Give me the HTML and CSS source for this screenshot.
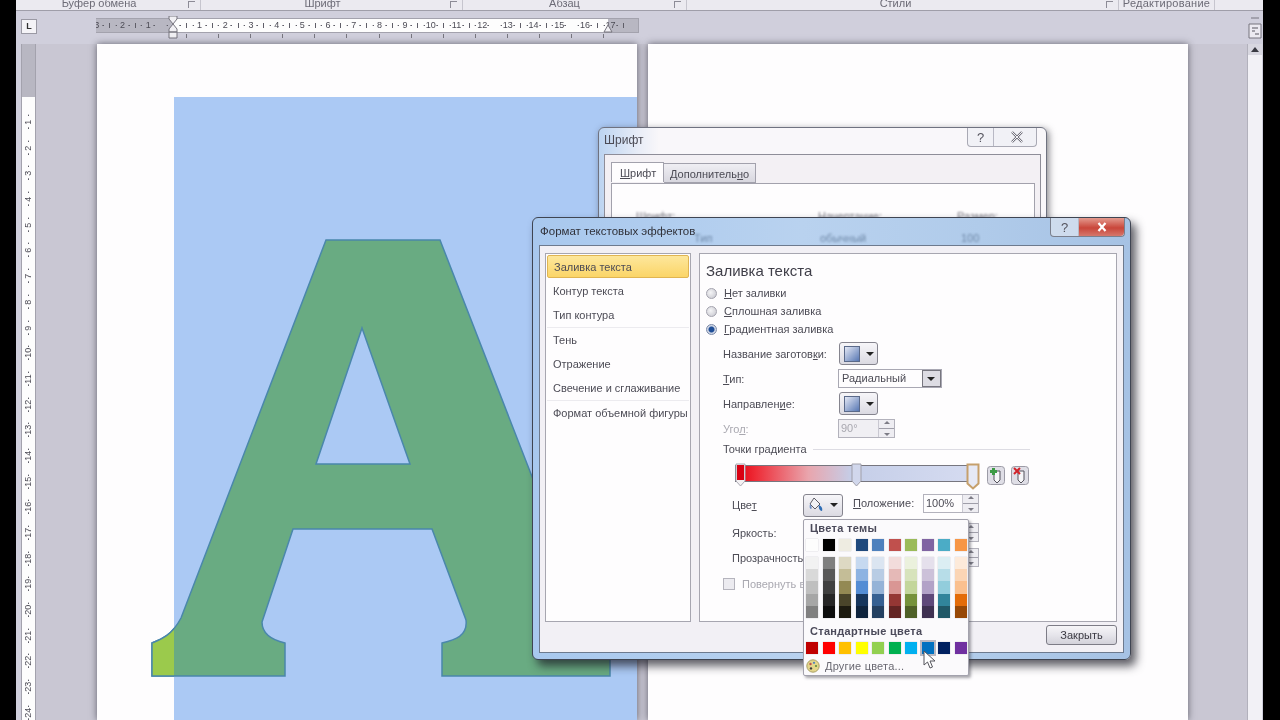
FILE: index.html
```html
<!DOCTYPE html>
<html lang="ru">
<head>
    <meta charset="UTF-8">
    <meta name="viewport" content="width=device-width, initial-scale=1.0">
    <title>Формат текстовых эффектов</title>
    <link rel="stylesheet" href="styles.css">
</head>
<body>
    <div class="app">
        <div class="ribbon">
            <div class="group group-clip"><span>Буфер обмена</span><i class="launcher"></i></div>
            <div class="group group-font"><span>Шрифт</span><i class="launcher"></i></div>
            <div class="group group-para"><span>Абзац</span><i class="launcher"></i></div>
            <div class="group group-styles"><span>Стили</span><i class="launcher"></i></div>
            <div class="group group-edit"><span>Редактирование</span></div>
        </div>

        <div class="ruler-row">
            <div class="tab-btn">L</div>
            <div class="h-ruler">
                <div class="h-numbers">
                    <span>3</span><span>2</span><span>1</span><span></span>
                    <span>1</span><span>2</span><span>3</span><span>4</span><span>5</span><span>6</span>
                    <span>7</span><span>8</span><span>9</span><span>10</span><span>11</span><span>12</span>
                    <span>13</span><span>14</span><span>15</span><span>16</span><span>17</span>
                </div>
                <svg class="indent indent-left" viewBox="0 0 10 23"><path d="M1 0h8v3L5 8 1 3zM5 8l4 5v3H1v-3zM1 16h8v6H1z" fill="#f1f0f4" stroke="#77757f"/></svg>
                <svg class="indent indent-right" viewBox="0 0 10 9"><path d="M5 1l4 7H1z" fill="#f1f0f4" stroke="#77757f"/></svg>
            </div>
            <svg class="split-btn" viewBox="0 0 14 26"><path d="M3 2h8M1 8h12v14H1z" fill="#eceaf1" stroke="#77757f"/><path d="M4 12h6M4 15h3M7 18h4" stroke="#56545e" fill="none"/></svg>
        </div>

        <div class="main">
            <div class="v-ruler">
                <div class="v-numbers">
                    <span>1</span><span>2</span><span>3</span><span>4</span><span>5</span><span>6</span>
                    <span>7</span><span>8</span><span>9</span><span>10</span><span>11</span><span>12</span>
                    <span>13</span><span>14</span><span>15</span><span>16</span><span>17</span><span>18</span>
                    <span>19</span><span>20</span><span>21</span><span>22</span><span>23</span><span>24</span>
                </div>
            </div>
            <div class="doc">
                <div class="page">
                    <div class="blue-box"></div>
                    <svg class="letter" viewBox="97 44 540 676">
                        <defs>
                            <path id="letterA" d="M152 676V643C162 639 172 635 181 618L326 240H440L587 618C594 634 600 640 610 643V676H442V643C455 640 468 636 466 620L432 529H293L262 622C262 634 272 640 285 643V676ZM362 328L316 464H410Z"/>
                            <clipPath id="onWhite"><rect x="97" y="44" width="77" height="676"/></clipPath>
                        </defs>
                        <use href="#letterA" fill="#69ab82" fill-rule="evenodd" stroke="#4a87ab" stroke-width="1.5"/>
                        <use href="#letterA" fill="#9bca4c" fill-rule="evenodd" stroke="#4a87ab" stroke-width="1.5" clip-path="url(#onWhite)"/>
                    </svg>
                </div>
                <div class="page"></div>
            </div>
            <div class="scrollbar"><div class="scroll-up"></div></div>
        </div>

        <!-- окно "Шрифт" -->
        <div class="font-dialog">
            <div class="font-title">
                <span>Шрифт</span>
                <div class="caption-btns plain">
                    <b class="cap-help">?</b>
                    <b class="cap-close"><svg viewBox="0 0 14 12"><path d="M2 1l10 10M12 1L2 11" stroke="#6f6e78" stroke-width="2.4" fill="none"/><path d="M2 1l10 10M12 1L2 11" stroke="#f3f2f6" stroke-width="1" fill="none"/></svg></b>
                </div>
            </div>
            <div class="font-body">
                <div class="font-tabs">
                    <div class="font-tab active"><u>Ш</u>рифт</div>
                    <div class="font-tab">Дополнитель<u>н</u>о</div>
                </div>
                <div class="font-sheet">
                    <div class="sheet-head"><span>Шрифт:</span><span>Начертание:</span><span>Размер:</span></div>
                </div>
            </div>
        </div>

        <!-- окно "Формат текстовых эффектов" -->
        <div class="fx-dialog">
            <div class="fx-title">
                <span class="fx-name">Формат текстовых эффектов</span>
                <div class="behind"><span>Тип</span><span>обычный</span><span>100</span></div>
                <div class="caption-btns">
                    <b class="cap-help">?</b>
                    <b class="cap-close red"><svg viewBox="0 0 14 12"><path d="M3.500 2l7 8M10.500 2l-7 8" stroke="#fff" stroke-width="2.200" fill="none"/></svg></b>
                </div>
            </div>
            <div class="fx-inner">
                <div class="fx-panels">
                    <ul class="fx-list">
                        <li class="selected">Заливка текста</li>
                        <li>Контур текста</li>
                        <li class="before-line">Тип контура</li>
                        <li>Тень</li>
                        <li>Отражение</li>
                        <li class="before-line">Свечение и сглаживание</li>
                        <li>Формат объемной фигуры</li>
                    </ul>
                    <div class="fx-pane">
                        <h3>Заливка текста</h3>
                        <div class="radio-row"><i class="radio"></i><span><u>Н</u>ет заливки</span></div>
                        <div class="radio-row"><i class="radio"></i><span><u>С</u>плошная заливка</span></div>
                        <div class="radio-row"><i class="radio on"></i><span><u>Г</u>радиентная заливка</span></div>

                        <div class="form-row row-preset">
                            <label>Название заготов<u>к</u>и:</label>
                            <div class="drop-btn"><i class="preset-swatch"></i><i class="arrow"></i></div>
                        </div>
                        <div class="form-row row-type">
                            <label><u>Т</u>ип:</label>
                            <div class="combo"><span>Радиальный</span><b><i class="arrow"></i></b></div>
                        </div>
                        <div class="form-row row-dir">
                            <label>Направлен<u>и</u>е:</label>
                            <div class="drop-btn"><i class="preset-swatch"></i><i class="arrow"></i></div>
                        </div>
                        <div class="form-row row-angle disabled">
                            <label>Уго<u>л</u>:</label>
                            <div class="spin spin-angle"><span>90°</span><b></b></div>
                        </div>

                        <div class="section-title"><span>Точки градиента</span><i></i></div>

                        <div class="stops-row">
                            <div class="grad-bar">
                                <svg class="stop stop-red" viewBox="0 0 11 25"><path d="M1 1h9v17l-4.500 5-4.500-5z" fill="#f4f1f3" stroke="#a9a8b2"/><rect x="2" y="2" width="7" height="15" fill="#d90012"/></svg>
                                <svg class="stop stop-mid" viewBox="0 0 11 25"><path d="M1 1h9v17l-4.500 5-4.500-5z" fill="#d1d7ec" stroke="#a09fa9"/></svg>
                                <svg class="stop stop-end" viewBox="0 0 14 27"><path d="M1.500 1.500h11v19l-5.500 5-5.500-5z" fill="#e6e9f6" stroke="#c6a06c" stroke-width="2"/></svg>
                            </div>
                            <svg class="stop-btn btn-add" viewBox="0 0 18 19"><rect x=".5" y=".5" width="17" height="18" rx="3" fill="#dfdee6" stroke="#9c9ba6"/><path d="M7 5h6v9l-3 3-3-3z" fill="#f6f6f8" stroke="#55535c"/><path d="M5 2h3v2h2v3H8v2H5V7H3V4h2z" fill="#3d9b45"/></svg>
                            <svg class="stop-btn btn-del" viewBox="0 0 18 19"><rect x=".5" y=".5" width="17" height="18" rx="3" fill="#dfdee6" stroke="#9c9ba6"/><path d="M7 5h6v9l-3 3-3-3z" fill="#f6f6f8" stroke="#55535c"/><path d="M3 2l6 6M9 2L3 8" stroke="#d2232a" stroke-width="2"/></svg>
                        </div>

                        <div class="form-row row-color">
                            <label class="indent-label">Цве<u>т</u></label>
                            <div class="drop-btn color-btn">
                                <svg class="bucket" viewBox="0 0 16 16"><path d="M6 1l6 6-5 5-5-5z" fill="#f2f2f5" stroke="#5d5c66"/><path d="M2 7c-1 3 0 5 1 5s1-3-1-5z" fill="#6e8fc4"/><path d="M11 8c2 1 4 3 3 6-2 0-4-3-3-6z" fill="#2f6db5"/></svg>
                                <i class="arrow"></i>
                            </div>
                            <label class="pos-label"><u>П</u>оложение:</label>
                            <div class="spin"><span>100%</span><b></b></div>
                        </div>
                        <div class="form-row row-bright">
                            <label class="indent-label wide">Яркость:</label>
                            <div class="spin"><b></b></div>
                        </div>
                        <div class="form-row row-transp">
                            <label class="indent-label wide">Прозрачность:</label>
                            <div class="spin"><b></b></div>
                        </div>
                        <div class="check-row"><i class="check"></i><span>Повернуть вместе с фигурой</span></div>
                    </div>
                </div>
                <div class="fx-footer"><button type="button">Закрыть</button></div>
            </div>
        </div>

        <!-- палитра -->
        <div class="palette">
            <div class="palette-title">Цвета темы</div>
            <div class="swatch-row theme-row"><i></i><i></i><i></i><i></i><i></i><i></i><i></i><i></i><i></i><i></i></div>
            <div class="swatch-row shade-row"><i></i><i></i><i></i><i></i><i></i><i></i><i></i><i></i><i></i><i></i></div>
            <div class="palette-title second">Стандартные цвета</div>
            <div class="swatch-row std-row"><i></i><i></i><i></i><i></i><i></i><i></i><i></i><i></i><i></i><i></i></div>
            <div class="more-row">
                <svg viewBox="0 0 14 14"><circle cx="7" cy="7" r="6.200" fill="#e4d68a" stroke="#a9a067"/><circle cx="4.500" cy="5" r="1.200" fill="#c0504d"/><circle cx="8" cy="3.800" r="1.100" fill="#4f81bd"/><circle cx="10" cy="7" r="1.100" fill="#5d8f3a"/><circle cx="5" cy="9.400" r="1.200" fill="#3a3a3a"/></svg>
                <span>Другие цвета...</span>
            </div>
        </div>

        <svg class="cursor" viewBox="0 0 13 19"><path d="M1 1v14l3.500-3 2.500 6 2.500-1-2.500-6H12z" fill="#fff" stroke="#55555c"/></svg>
    </div>
</body>
</html>
```

FILE: styles.css
```css
html, body {
    margin: 0;
    padding: 0;
    height: 720px;
    overflow: hidden;
    background: #000;
}

body {
    font-family: "Liberation Sans", Arial, sans-serif;
    font-size: 11px;
    color: #45444c;
}

.app {
    position: relative;
    width: 1247px;
    height: 720px;
    margin-left: 16px;
    background: #d0cfdc;
    overflow: hidden;
    filter: blur(0.45px);
}

/* лента, виден только низ */
.ribbon {
    display: flex;
    height: 10px;
    background: #ebeaf0;
    border-bottom: 1px solid #9f9ea9;
    overflow: hidden;
}

.group {
    position: relative;
    height: 10px;
    border-right: 1px solid #c6c5ce;
    text-align: center;
    line-height: 7px;
    font-size: 11px;
    color: #6c6b76;
}

.group-clip { width: 166px; padding-right: 18px; }
.group-font { width: 243px; padding-right: 18px; }
.group-para { width: 203px; padding-right: 20px; }
.group-styles { width: 417px; padding-right: 14px; }
.group-edit { width: 95px; letter-spacing: .25px; }

.launcher {
    position: absolute;
    right: 5px;
    top: 1px;
    width: 6px;
    height: 6px;
    border-left: 1px solid #8c8b96;
    border-top: 1px solid #8c8b96;
}

/* линейки */
.ruler-row {
    display: flex;
    height: 33px;
    align-items: flex-start;
}

.tab-btn {
    width: 14px;
    height: 13px;
    margin: 8px 0 0 5px;
    border: 1px solid #9a99a4;
    background: #f4f3f7;
    font-size: 9px;
    font-weight: bold;
    line-height: 13px;
    text-align: center;
    color: #333;
}

.h-ruler {
    position: relative;
    width: 542px;
    height: 13px;
    margin: 7px 0 0 59px;
    border: 1px solid #a3a2ad;
    border-width: 1px 1px 1px 0;
    background: linear-gradient(to right, #b8b7c2 77px, #fdfdfd 77px, #fdfdfd 512px, #b8b7c2 512px);
}

/* метки табуляции под линейкой */
.h-ruler::after {
    content: "";
    position: absolute;
    left: 90px;
    top: 15px;
    width: 420px;
    height: 4px;
    background: repeating-linear-gradient(to right, #77767f 0 1px, transparent 1px 32.1px);
}

.h-numbers {
    display: flex;
    margin-left: -12px;
    height: 13px;
    overflow: hidden;
    font-size: 9px;
    line-height: 13px;
    color: #4c4b55;
    clip-path: inset(0 0 0 12px);
}

.h-numbers span {
    flex: 0 0 25.7px;
    text-align: center;
    background:
        radial-gradient(circle at 6.4px 50%, #5f5e68 .7px, transparent 1px),
        radial-gradient(circle at 19.3px 50%, #5f5e68 .7px, transparent 1px),
        linear-gradient(#5f5e68, #5f5e68) 25.2px 4px / 1px 5px no-repeat;
}

.indent {
    position: absolute;
}

.indent-left {
    left: 72px;
    top: -3px;
    width: 10px;
    height: 23px;
}

.indent-right {
    left: 507px;
    top: 5px;
    width: 10px;
    height: 9px;
}

.split-btn {
    width: 14px;
    height: 26px;
    margin: 5px 0 0 609px;
}

.main {
    display: flex;
    height: 676px;
}

.v-ruler {
    width: 13px;
    height: 676px;
    margin-left: 5px;
    border-right: 1px solid #a3a2ad;
    border-left: 1px solid #a3a2ad;
    background: linear-gradient(#b8b7c2 53px, #fdfdfd 53px);
    overflow: hidden;
}

.v-numbers {
    display: flex;
    flex-direction: column;
    padding-top: 65px;
    font-size: 9px;
    color: #4c4b55;
}

.v-numbers span {
    flex: 0 0 25.7px;
    height: 25.7px;
    writing-mode: vertical-rl;
    transform: rotate(180deg);
    text-align: center;
    line-height: 13px;
    background:
        radial-gradient(circle at 50% 6.4px, #5f5e68 .7px, transparent 1px),
        radial-gradient(circle at 50% 19.3px, #5f5e68 .7px, transparent 1px);
}

.doc {
    display: flex;
    gap: 11px;
    width: 1211px;
    padding-left: 61px;
    box-sizing: border-box;
    background: #c9c7d3;
}

.page {
    position: relative;
    width: 540px;
    height: 676px;
    background: #fefdfe;
    box-shadow: 0 0 7px rgba(40, 40, 50, .65);
}

.blue-box {
    height: 623px;
    margin: 53px 0 0 77px;
    background: #abc9f4;
}

.letter {
    position: absolute;
    left: 0;
    top: 0;
    width: 540px;
    height: 676px;
}

.scrollbar {
    width: 15px;
    background: #f2f1f6;
    border-left: 1px solid #b2b1bc;
    box-sizing: border-box;
}

.scroll-up {
    height: 11px;
    background: #d8d7e0;
    position: relative;
}

.scroll-up::after {
    content: "";
    position: absolute;
    left: 3px;
    top: 3px;
    border: 4px solid transparent;
    border-top: 0;
    border-bottom: 5px solid #3a3a42;
}

/* общие кнопки заголовка */
.caption-btns {
    position: absolute;
    display: flex;
    height: 18px;
    border: 1px solid #7a7f8d;
    border-top: 0;
    border-radius: 0 0 4px 4px;
    background: rgba(235, 236, 242, .55);
}

.caption-btns b {
    display: flex;
    align-items: center;
    justify-content: center;
    font-size: 13px;
    font-weight: normal;
    color: #55545e;
}

.caption-btns svg {
    width: 14px;
    height: 12px;
}

.cap-help {
    width: 27px;
    border-right: 1px solid #b8b8c4;
}

.cap-close {
    width: 45px;
}

.cap-close.red {
    background: linear-gradient(#e49a8e, #c9463a 55%, #d5776c);
    border-radius: 0 0 4px 0;
}

/* окно Шрифт */
.font-dialog {
    position: absolute;
    left: 582px;
    top: 127px;
    width: 449px;
    height: 150px;
    box-sizing: border-box;
    padding: 0 5px;
    border: 1px solid #6f7280;
    border-radius: 6px 6px 0 0;
    background: linear-gradient(to right, #bcd4f1, #e9edf7 40px, #f9f7fa 60px);
    box-shadow: 2px 2px 7px rgba(40, 40, 50, .55);
}

.font-title {
    height: 26px;
    line-height: 25px;
    font-size: 12px;
    color: #4c4b55;
}

.caption-btns.plain {
    right: 9px;
    top: 0;
    border-color: #a9a9b4;
}

.caption-btns.plain .cap-help {
    width: 25px;
}

.caption-btns.plain .cap-close {
    width: 39px;
    padding-left: 3px;
}

.font-body {
    height: 120px;
    border: 1px solid #8e8d98;
    background: #f3f0f4;
    padding: 8px 5px 0 6px;
}

.font-tabs {
    display: flex;
}

.font-tab {
    height: 18px;
    padding: 0 6px;
    line-height: 20px;
    border: 1px solid #a2a1ac;
    border-left: 0;
    background: linear-gradient(#efeef3, #d8d7df);
    color: #4b4a54;
}

.font-tab.active {
    height: 20px;
    margin-top: -1px;
    width: 53px;
    box-sizing: border-box;
    padding: 0 8px;
    background: #fefdfe;
    border-left: 1px solid #a2a1ac;
    border-bottom: 0;
    margin-bottom: -1px;
    position: relative;
}

.font-sheet {
    height: 90px;
    box-sizing: border-box;
    padding: 26px 0 0 24px;
    background: #fefdfe;
    border: 1px solid #a2a1ac;
}

.sheet-head {
    display: flex;
    color: #777680;
    filter: blur(1px);
}

.sheet-head span:nth-child(1) { width: 182px; }
.sheet-head span:nth-child(2) { width: 139px; }

/* окно эффектов */
.fx-dialog {
    position: absolute;
    left: 516px;
    top: 217px;
    width: 599px;
    height: 443px;
    box-sizing: border-box;
    border: 1px solid #3f4552;
    border-radius: 6px;
    padding: 0 6px 6px 6px;
    background: linear-gradient(to right, #a8c8ee, #b9d2ef 45%, #b0cbea 75%, #a6c2e4);
    box-shadow: 5px 6px 10px rgba(25, 25, 35, .7);
}

.fx-title {
    position: relative;
    height: 27px;
}

.fx-name {
    display: block;
    padding-left: 1px;
    line-height: 27px;
    font-size: 11.500px;
    color: #2f3038;
}

.behind {
    position: absolute;
    left: 155px;
    top: 14px;
    display: flex;
    color: #6f89a8;
    filter: blur(1.2px);
}

.behind span:nth-child(1) { width: 126px; }
.behind span:nth-child(2) { width: 141px; }

.fx-dialog .caption-btns {
    right: -1px;
    top: 0;
}

.fx-inner {
    height: 408px;
    box-sizing: border-box;
    padding: 7px 6px 0 5px;
    border: 1px solid #6d7a8e;
    background: #f2f0f5;
}

.fx-panels {
    display: flex;
    gap: 8px;
    height: 369px;
}

.fx-list {
    width: 146px;
    height: 369px;
    box-sizing: border-box;
    margin: 0;
    padding: 1px;
    list-style: none;
    border: 1px solid #a7a6b0;
    background: #fefdfe;
}

.fx-list li {
    height: 24px;
    line-height: 24px;
    padding-left: 6px;
    color: #4d4c56;
    white-space: nowrap;
}

.fx-list li.selected {
    height: 23px;
    margin-bottom: 1px;
    line-height: 22px;
    border: 1px solid #e0b552;
    border-radius: 2px;
    box-sizing: border-box;
    background: linear-gradient(#fde79c, #fbd568);
}

.fx-list li.before-line {
    border-bottom: 1px solid #ecebef;
}

.fx-pane {
    position: relative;
    flex: 1;
    height: 369px;
    box-sizing: border-box;
    padding-top: 8px;
    border: 1px solid #a7a6b0;
    background: #fefdfe;
}

.fx-pane h3 {
    margin: 0 0 4px 6px;
    height: 18px;
    line-height: 18px;
    font-size: 15px;
    font-weight: normal;
    color: #3f3e48;
}

.radio-row {
    display: flex;
    align-items: center;
    height: 18px;
    padding-left: 6px;
    color: #4d4c56;
}

.radio {
    width: 11px;
    height: 11px;
    margin-right: 7px;
    border: 1px solid #a4a3ae;
    border-radius: 50%;
    box-sizing: border-box;
    background: radial-gradient(circle at 40% 40%, #f5f5f7, #c4c4cc);
}

.radio.on {
    border-color: #7b8aa8;
    background: radial-gradient(circle, #1f4e97 2.5px, #cfd6e6 3.5px);
}

.form-row {
    display: flex;
    align-items: center;
    padding-left: 23px;
    color: #4d4c56;
}

.form-row label {
    width: 115px;
    flex: none;
}

.row-preset { height: 23px; margin-top: 4px; }
.row-type { height: 19px; margin-top: 4px; }
.row-dir { height: 23px; margin-top: 4px; }
.row-angle { height: 19px; margin-top: 4px; }
.row-color { height: 24px; margin-top: 9px; padding-left: 32px; }
.row-bright { height: 19px; margin-top: 6px; padding-left: 32px; }
.row-transp { height: 19px; margin-top: 6px; padding-left: 32px; }

.row-color .pos-label,
.row-color .spin {
    margin-bottom: 4px;
}

.form-row.disabled {
    color: #a9a8b0;
}

.form-row label.indent-label {
    width: 71px;
}

.form-row label.wide {
    width: 191px;
}

.form-row label.pos-label {
    width: 70px;
    margin-left: 10px;
}

.drop-btn {
    display: flex;
    align-items: center;
    width: 39px;
    height: 23px;
    box-sizing: border-box;
    padding-left: 4px;
    margin-left: 1px;
    border: 1px solid #85848e;
    border-radius: 3px;
    background: linear-gradient(#f7f6f9, #dbdae2);
}

.preset-swatch {
    width: 14px;
    height: 14px;
    border: 1px solid #5b6a8a;
    background: linear-gradient(135deg, #e4e8f5, #5878b4);
}

.arrow {
    display: block;
    width: 0;
    height: 0;
    margin-left: 6px;
    border: 4px solid transparent;
    border-top: 4px solid #222;
    border-bottom: 0;
}

.combo {
    display: flex;
    width: 104px;
    height: 19px;
    box-sizing: border-box;
    border: 1px solid #a9a8b3;
    background: #fefdfe;
}

.combo span {
    flex: 1;
    padding-left: 3px;
    line-height: 17px;
}

.combo b {
    display: flex;
    align-items: center;
    width: 17px;
    border: 1px solid #77767f;
    background: #dddce3;
}

.combo .arrow {
    margin-left: 4px;
}

.spin {
    display: flex;
    width: 56px;
    height: 19px;
    box-sizing: border-box;
    border: 1px solid #b3b2bc;
    background: #fefdfe;
}

.spin-angle {
    width: 57px;
    background: #f0eff3;
}

.spin span {
    flex: 1;
    padding-left: 2px;
    line-height: 17px;
}

.spin b {
    position: relative;
    width: 15px;
    margin-left: auto;
    border-left: 1px solid #c9c8d1;
    background: linear-gradient(#eeedf2 48%, #9f9ea9 48%, #9f9ea9 54%, #eeedf2 54%);
}

.spin b::before,
.spin b::after {
    content: "";
    position: absolute;
    left: 5px;
    border: 3px solid transparent;
}

.spin b::before {
    top: 1px;
    border-top: 0;
    border-bottom: 3px solid #7d7c86;
}

.spin b::after {
    bottom: 1px;
    border-bottom: 0;
    border-top: 3px solid #7d7c86;
}

.section-title {
    display: flex;
    align-items: center;
    height: 16px;
    margin-top: 3px;
    padding: 0 86px 0 23px;
    color: #4d4c56;
}

.section-title i {
    flex: 1;
    height: 1px;
    margin-left: 6px;
    background: #dddce3;
}

.stops-row {
    display: flex;
    align-items: flex-start;
    height: 20px;
    margin-top: 7px;
    padding-left: 35px;
}

.grad-bar {
    position: relative;
    width: 243px;
    height: 17px;
    margin-top: 1px;
    box-sizing: border-box;
    border: 1px solid #77767f;
    background: linear-gradient(to right, #e3000f 0, #ee2b36 8%, #e9a5ad 30%, #c5cee8 48%, #d6dcf1 100%);
}

.stop {
    position: absolute;
    top: -3px;
    width: 11px;
    height: 25px;
}

.stop-red {
    left: -1px;
}

.stop-mid {
    left: 115px;
}

.stop-end {
    left: 230px;
    width: 14px;
    height: 27px;
}

.stop-btn {
    width: 18px;
    height: 19px;
    margin-top: 2px;
}

.btn-add {
    margin-left: 9px;
}

.btn-del {
    margin-left: 6px;
}

.color-btn {
    width: 40px;
    margin-left: 0;
}

.bucket {
    width: 16px;
    height: 16px;
}

.check-row {
    display: flex;
    align-items: center;
    height: 12px;
    margin-top: 11px;
    padding-left: 23px;
    color: #a9a8b0;
}

.check {
    width: 12px;
    height: 12px;
    margin-right: 7px;
    box-sizing: border-box;
    border: 1px solid #b5b4bd;
    background: #ecebf0;
}

.fx-footer {
    display: flex;
    justify-content: flex-end;
    padding-top: 3px;
}

.fx-footer button {
    width: 71px;
    height: 20px;
    padding: 0;
    border: 1px solid #7d7c86;
    border-radius: 3px;
    background: linear-gradient(#f6f5f8, #e6e5eb 50%, #d3d2da);
    font: inherit;
    color: #3a3942;
}

/* палитра */
.palette {
    position: absolute;
    left: 787px;
    top: 519px;
    width: 166px;
    height: 157px;
    box-sizing: border-box;
    padding: 2px 2px 0 2px;
    border: 1px solid #a3a2ad;
    border-radius: 2px;
    background: #fbfafc;
    box-shadow: 2px 2px 3px rgba(60, 60, 70, .45);
}

.palette-title {
    height: 14px;
    margin-left: 4px;
    line-height: 13px;
    font-weight: bold;
    letter-spacing: .3px;
    color: #4b4a5a;
}

.palette-title.second {
    margin-top: 7px;
}

.swatch-row {
    display: flex;
    gap: 4.500px;
}

.swatch-row i {
    flex: 0 0 12px;
    height: 12px;
    box-shadow: 0 0 1px #b5b4bd;
}

.theme-row { margin-top: 3px; }
.theme-row i:nth-child(1) { background: #fdfdfd; }
.theme-row i:nth-child(2) { background: #000; }
.theme-row i:nth-child(3) { background: #eeece1; }
.theme-row i:nth-child(4) { background: #1f497d; }
.theme-row i:nth-child(5) { background: #4f81bd; }
.theme-row i:nth-child(6) { background: #c0504d; }
.theme-row i:nth-child(7) { background: #9bbb59; }
.theme-row i:nth-child(8) { background: #8064a2; }
.theme-row i:nth-child(9) { background: #4bacc6; }
.theme-row i:nth-child(10) { background: #f79646; }

.shade-row { margin-top: 6px; }
.shade-row i { height: 61px; }
.shade-row i:nth-child(1) { background: linear-gradient(#f2f2f2 20%, #d9d9d9 20% 40%, #bfbfbf 40% 60%, #a6a6a6 60% 80%, #808080 80%); }
.shade-row i:nth-child(2) { background: linear-gradient(#7f7f7f 20%, #595959 20% 40%, #404040 40% 60%, #262626 60% 80%, #0d0d0d 80%); }
.shade-row i:nth-child(3) { background: linear-gradient(#ddd9c3 20%, #c4bd97 20% 40%, #938953 40% 60%, #4a452a 60% 80%, #1d1b10 80%); }
.shade-row i:nth-child(4) { background: linear-gradient(#c6d9f0 20%, #8db3e2 20% 40%, #548dd4 40% 60%, #17365d 60% 80%, #0f243e 80%); }
.shade-row i:nth-child(5) { background: linear-gradient(#dbe5f1 20%, #b8cce4 20% 40%, #95b3d7 40% 60%, #366092 60% 80%, #244061 80%); }
.shade-row i:nth-child(6) { background: linear-gradient(#f2dcdb 20%, #e5b9b7 20% 40%, #d99694 40% 60%, #953734 60% 80%, #632423 80%); }
.shade-row i:nth-child(7) { background: linear-gradient(#ebf1dd 20%, #d7e3bc 20% 40%, #c3d69b 40% 60%, #76923c 60% 80%, #4f6128 80%); }
.shade-row i:nth-child(8) { background: linear-gradient(#e5e0ec 20%, #ccc1d9 20% 40%, #b2a2c7 40% 60%, #5f497a 60% 80%, #3f3151 80%); }
.shade-row i:nth-child(9) { background: linear-gradient(#dbeef3 20%, #b7dde8 20% 40%, #92cddc 40% 60%, #31859b 60% 80%, #205867 80%); }
.shade-row i:nth-child(10) { background: linear-gradient(#fdeada 20%, #fbd5b5 20% 40%, #fac08f 40% 60%, #e36c09 60% 80%, #974806 80%); }

.std-row { margin-top: 3px; }
.std-row i:nth-child(1) { background: #c00000; }
.std-row i:nth-child(2) { background: #ff0000; }
.std-row i:nth-child(3) { background: #ffc000; }
.std-row i:nth-child(4) { background: #ffff00; }
.std-row i:nth-child(5) { background: #92d050; }
.std-row i:nth-child(6) { background: #00b050; }
.std-row i:nth-child(7) { background: #00b0f0; }
.std-row i:nth-child(8) { background: #0070c0; outline: 2px solid #b9b8c2; }
.std-row i:nth-child(9) { background: #002060; }
.std-row i:nth-child(10) { background: #7030a0; }

.more-row {
    display: flex;
    align-items: center;
    height: 14px;
    margin-top: 5px;
    letter-spacing: .2px;
    color: #6a6972;
}

.more-row svg {
    width: 14px;
    height: 14px;
    margin-right: 5px;
}

.cursor {
    position: absolute;
    left: 907px;
    top: 650px;
    width: 13px;
    height: 19px;
}
```
